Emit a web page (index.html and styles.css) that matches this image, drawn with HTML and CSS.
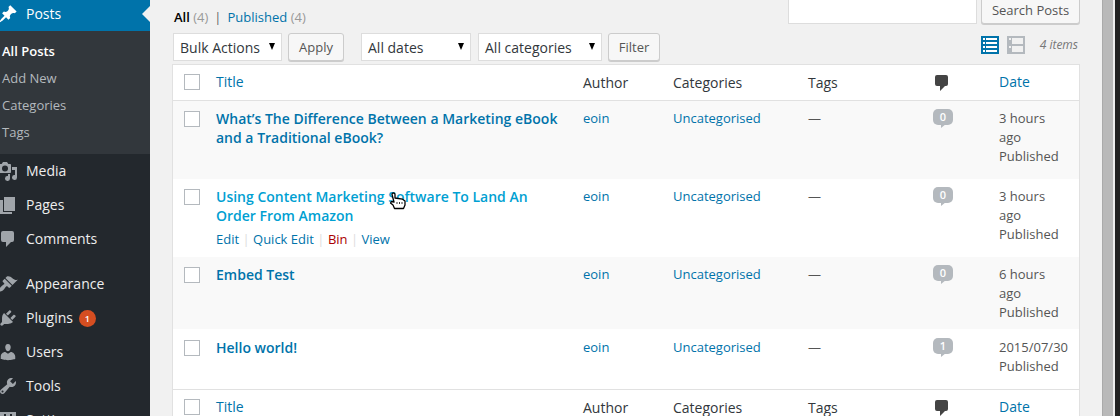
FILE: index.html
```html
<!DOCTYPE html>
<html lang="en">
<head>
<meta charset="utf-8">
<title>Posts</title>
<link rel="stylesheet" href="styles.css">
</head>
<body>
<svg class="defs" width="0" height="0">
  <symbol id="bubble" viewBox="0 0 20 20"><path d="M5 2h9q2 0 2 2v7q0 2-2 2h-1l-5 5v-5H5q-2 0-2-2V4q0-2 2-2z"/></symbol>
</svg>
<div class="screen">
  <nav class="menu">
    <a class="item current"><svg viewBox="0 0 20 20"><path d="M10.44 3.02l1.82-1.82 6.36 6.35-1.83 1.82c-1.05-.68-2.48-.57-3.41.36l-.75.75c-.92.93-1.04 2.35-.35 3.41l-1.83 1.82-2.41-2.41-2.8 2.79c-.42.42-3.38 2.71-3.8 2.29s1.86-3.39 2.28-3.81l2.79-2.79L4.1 9.36l1.83-1.82c1.05.69 2.48.57 3.4-.36l.75-.75c.93-.92 1.05-2.35.36-3.41z"/></svg><span>Posts</span><i class="arrow"></i></a>
    <div class="submenu"><a class="on">All Posts</a><a>Add New</a><a>Categories</a><a>Tags</a></div>
    <a class="item"><svg viewBox="0 0 20 20"><path fill-rule="evenodd" d="M13 11V4c0-.55-.45-1-1-1h-1.670L9 1H5L3.670 3H2c-.55 0-1 .45-1 1v7c0 .55.450 1 1 1h10c.550 0 1-.45 1-1zM7 4.500a3 3 0 1 1 0 6 3 3 0 0 1 0-6zM14 6h5v10.500a2.500 2.500 0 1 1-2-2.450V9h-3zM10 13h2v4.500a2.500 2.500 0 1 1-2-2.450z"/></svg><span>Media</span></a>
    <a class="item"><svg viewBox="0 0 20 20"><path d="M6 2h11v14H6zM2 5h3v12h9v2H2z"/></svg><span>Pages</span></a>
    <a class="item"><svg><use href="#bubble"/></svg><span>Comments</span></a>
    <a class="item gap"><svg viewBox="0 0 20 20"><path d="M14.480 11.060L7.410 3.990l1.500-1.500c.5-.56 2.300-.47 3.510.32 1.210.8 1.430 1.280 2.910 2.100 1.180.64 2.450 1.260 4.450.85zm-.71.710L6.700 4.700 4.930 6.470c-.39.39-.39 1.020 0 1.410l1.060 1.060c.39.39.39 1.030 0 1.420-.6.600-1.430 1.110-2.210 1.690-.350.260-.70.530-1.010.840C1.430 14.230.400 16.080 1.400 17.070c.99 1 2.840-.03 4.180-1.360.310-.310.580-.660.850-1.020.570-.780 1.080-1.610 1.690-2.210.39-.390 1.020-.39 1.410 0l1.060 1.060c.39.39 1.020.39 1.410 0z"/></svg><span>Appearance</span></a>
    <a class="item"><svg viewBox="0 0 20 20"><path d="M13.110 4.360L9.870 7.600 8 5.730l3.240-3.240c.35-.34 1.050-.2 1.560.32.520.510.660 1.210.31 1.550zm-8 1.770l.91-1.120 9.010 9.010-1.190.840c-.710.710-2.630 1.160-3.820 1.160H6.140L4.900 17.260c-.590.590-1.540.590-2.120 0-.590-.580-.590-1.530 0-2.120l1.240-1.240v-3.880c0-1.130.400-3.190 1.090-3.890zm7.260 3.970l3.240-3.240c.340-.350 1.040-.21 1.550.310.520.510.660 1.210.31 1.550l-3.240 3.250z"/></svg><span>Plugins</span><b class="count">1</b></a>
    <a class="item"><svg viewBox="0 0 20 20"><path d="M10 9.250c-2.270 0-2.730-3.440-2.730-3.440C7 4.020 7.820 2 9.970 2c2.160 0 2.980 2.020 2.710 3.810 0 0-.41 3.440-2.680 3.440zm0 2.570L12.720 10c2.390 0 4.520 2.330 4.520 4.530v2.490s-3.650 1.130-7.240 1.130c-3.650 0-7.240-1.130-7.240-1.130v-2.490c0-2.250 1.940-4.480 4.470-4.480z"/></svg><span>Users</span></a>
    <a class="item"><svg viewBox="0 0 20 20"><path d="M16.680 9.770c-1.340 1.340-3.300 1.670-4.950.99l-5.410 6.520c-.99.99-2.590.99-3.580 0s-.99-2.590 0-3.570l6.520-5.420c-.68-1.650-.350-3.610.99-4.950 1.280-1.280 3.120-1.620 4.720-1.060l-2.890 2.890 2.820 2.820 2.860-2.870c.530 1.580.180 3.390-1.080 4.650zM3.810 16.210c.4.390 1.040.390 1.430 0 .4-.4.400-1.040 0-1.430-.390-.400-1.030-.400-1.430 0-.390.390-.390 1.030 0 1.430z"/></svg><span>Tools</span></a>
    <a class="item"><svg viewBox="0 0 20 20"><path fill-rule="evenodd" d="M2 2h16v16H2zM6 4v5h2V4zM12 4v2h2V4z"/></svg><span>Settings</span></a>
  </nav>
  <main class="content">
    <div class="top">
      <div class="views"><b>All</b> <span>(4)</span><em>|</em><a>Published</a> <span>(4)</span></div>
      <div class="search"><div class="field"></div><div class="button find">Search Posts</div></div>
    </div>
    <div class="filters">
      <div class="select bulk">Bulk Actions<i></i></div><div class="button apply">Apply</div>
      <div class="select dates">All dates<i></i></div><div class="select cats">All categories<i></i></div><div class="button filter">Filter</div>
      <div class="modes">
        <svg width="18" height="18" viewBox="0 0 18 18"><path fill="#0073aa" d="M0 0h18v18H0z"/><path fill="#fff" d="M2 2h2v2H2zM5 2h11v2H5zM2 6h2v2H2zM5 6h11v2H5zM2 10h2v2H2zM5 10h11v2H5zM2 14h2v2H2zM5 14h11v2H5z"/></svg>
        <svg width="18" height="18" viewBox="0 0 18 18"><path fill="#b4b9be" d="M0 0h18v18H0z"/><path fill="#f1f1f1" d="M5 2h11v6H5zM5 10h11v6H5zM2 2h2v2H2zM2 10h2v2H2z"/></svg>
        <span>4 items</span>
      </div>
    </div>
    <div class="table">
      <div class="row head"><i class="check"></i><a>Title</a><span>Author</span><span>Categories</span><span>Tags</span><svg><use href="#bubble"/></svg><a>Date</a></div>
      <div class="row odd"><i class="check"></i><div class="title">What’s The Difference Between a Marketing eBook<br>and a Traditional eBook?</div><a>eoin</a><a>Uncategorised</a><span>—</span><b class="num">0</b><span>3 hours<br>ago<br>Published</span></div>
      <div class="row"><i class="check"></i><div><div class="title hover">Using Content Marketing Software To Land An<br>Order From Amazon</div><div class="actions"><a>Edit</a><i>|</i><a>Quick Edit</a><i>|</i><a class="bin">Bin</a><i>|</i><a>View</a></div></div><a>eoin</a><a>Uncategorised</a><span>—</span><b class="num">0</b><span>3 hours<br>ago<br>Published</span></div>
      <div class="row odd third"><i class="check"></i><div class="title">Embed Test</div><a>eoin</a><a>Uncategorised</a><span>—</span><b class="num">0</b><span>6 hours<br>ago<br>Published</span></div>
      <div class="row fourth"><i class="check"></i><div class="title">Hello world!</div><a>eoin</a><a>Uncategorised</a><span>—</span><b class="num">1</b><span>2015/07/30<br>Published</span></div>
      <div class="row head foot"><i class="check"></i><a>Title</a><span>Author</span><span>Categories</span><span>Tags</span><svg><use href="#bubble"/></svg><a>Date</a></div>
    </div>
  </main>
  <div class="scrollbar"></div>
  <svg class="cursor" width="17" height="18" viewBox="0 0 17 18"><path fill="#fff" stroke="#000" stroke-width="1.300" stroke-linejoin="round" d="M3 2.500Q3 1 4.500 1T6 2.500V6l7.500 1.200L16 9v4l-1.500 3.500H5.500L4 13l-2.500-2 1-1.500L5 10z"/><path stroke="#000" stroke-width=".8" d="M8 10v2M10.500 10v2M13 10v2"/></svg>
</div>
</body>
</html>
```
FILE: styles.css
```css
* { box-sizing: border-box; }
body { margin: 0; background: #f1f1f1; font: 13px/19px "Open Sans", sans-serif; color: #555; }
i, em { font-style: normal; }
a { color: #0073aa; }
.defs { position: absolute; }
.screen { position: relative; display: flex; width: 1120px; height: 416px; overflow: hidden; }

.menu { width: 150px; flex: none; background: #23282d; margin-top: -3px; }
.item { display: flex; align-items: center; height: 34px; color: #eee; font-size: 14px; position: relative; }
.item span { padding-bottom: 2px; }
.item svg { width: 20px; height: 20px; margin: 0 8px 0 -2px; fill: #a0a5aa; flex: none; }
.item.current { background: #0073aa; color: #fff; }
.item.current svg { fill: #fff; }
.arrow { position: absolute; right: 0; top: 9px; border: 8px solid transparent; border-right-color: #f1f1f1; border-left: 0; }
.item.gap { margin-top: 11px; }
.submenu { height: 123px; padding-top: 7px; background: #32373c; }
.submenu a { display: block; height: 27px; line-height: 27px; padding-left: 2px; color: #b4b9be; }
.submenu .on { color: #fff; font-weight: 600; }
.count { width: 17px; height: 17px; margin-left: 6px; border-radius: 50%; background: #d54e21; color: #fff; font-size: 9px; line-height: 17px; font-weight: 600; text-align: center; }

.content { width: 952px; flex: none; padding: 0 22px; }
.top { display: flex; justify-content: space-between; height: 33px; }
.views { padding: 8px 0 0 2px; color: #999; }
.views b { color: #000; font-weight: 600; }
.views em { color: #666; margin: 0 7px 0 6px; }
.views a { margin-left: -1px; }
.search { display: flex; gap: 4px; margin-top: -4px; }
.field { width: 189px; height: 28px; background: #fff; border: 1px solid #ddd; }
.button { height: 28px; border: 1px solid #ccc; border-radius: 3px; background: #f7f7f7; box-shadow: 0 1px 0 #ccc; line-height: 26px; text-align: center; color: #555; }
.find { width: 99px; }
.filters { display: flex; height: 31px; align-items: flex-start; }
.select { display: flex; justify-content: space-between; align-items: center; height: 28px; padding: 0 6px; border: 1px solid #ddd; background: #fff; font-size: 14px; color: #32373c; white-space: nowrap; }
.select i { border: 3px solid transparent; border-top: 7px solid #000; border-bottom: 0; margin-top: -2px; }
.bulk { width: 109px; margin-left: 1px; }
.apply { width: 56px; margin: 0 17px 0 6px; }
.dates { width: 110px; margin-right: 7px; }
.cats { width: 124px; }
.filter { width: 52px; margin-left: 6px; }
.modes { display: flex; gap: 8px; margin: 3px 2px 0 auto; }
.modes span { margin-left: 7px; font-style: italic; font-size: 12px; line-height: 18px; color: #777; }

.table { border: 1px solid #e1e1e1; background: #fff; }
.row { display: grid; grid-template-columns: 43px 367px 90px 135px 124px 67px 1fr; height: 78px; padding-top: 8px; }
.row.odd { background: #f9f9f9; }
.row.third { height: 72px; }
.row.fourth { height: 60px; padding-top: 9px; }
.head { height: 36px; padding-top: 8px; border-bottom: 1px solid #e1e1e1; font-size: 14px; color: #32373c; }
.head > a { margin-top: -1px; }
.head svg { width: 20px; height: 20px; fill: #444; }
.foot { border-top: 1px solid #e1e1e1; border-bottom: 0; }
.check { width: 16px; height: 16px; margin: 2px 0 0 11px; border: 1px solid #b4b9be; background: #fff; }
.head .check { margin-top: 1px; }
.title { color: #0073aa; font-size: 14px; font-weight: 600; white-space: nowrap; }
.title.hover { color: #00a0d2; }
.actions { display: flex; gap: 3.400px; padding-top: 5px; }
.actions i { color: #ddd; }
.actions .bin { color: #a00; }
.num { position: relative; width: 20px; height: 16px; margin-left: 1px; border-radius: 5px; background: #b4b9be; color: #fff; font-size: 11px; line-height: 16px; font-weight: 600; text-align: center; }
.num::after { content: ""; position: absolute; left: 8px; top: 15px; border-top: 4px solid #b4b9be; border-right: 5px solid transparent; }

.scrollbar { flex: 1; background: linear-gradient(90deg, #aaa 1px, #b9b9b9 1px, #b9b9b9 11px, #eee 11px, #eee 13px, #222 13px); }
.cursor { position: absolute; left: 389px; top: 192px; }
```
